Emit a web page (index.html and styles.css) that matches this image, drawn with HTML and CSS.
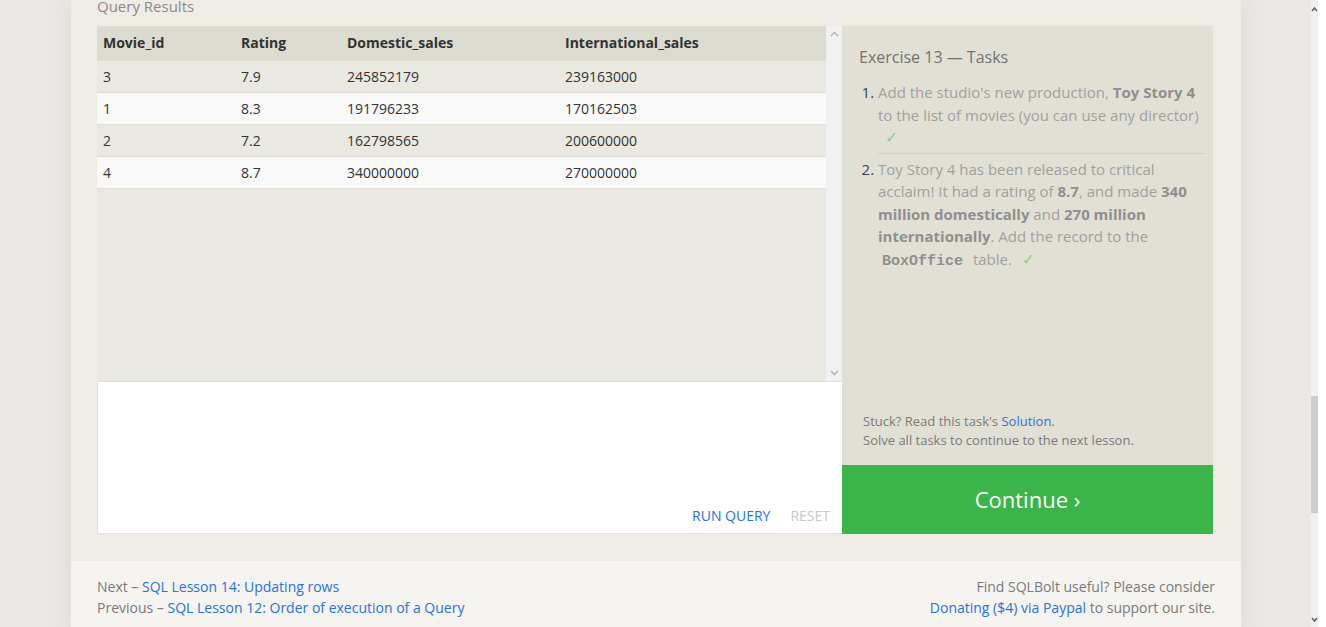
FILE: index.html
```html
<!DOCTYPE html>
<html lang="en">
<head>
<meta charset="utf-8">
<title>SQLBolt - Exercise 13</title>
<link rel="stylesheet" href="styles.css">
</head>
<body>
<div class="viewport">
  <div class="page">
    <div class="container">
      <section class="lesson">
        <h3 class="results-title">Query Results</h3>
        <div class="exercise">
          <div class="work">
            <div class="results">
              <div class="results-scroll">
                <table class="grid">
                  <thead>
                    <tr><th class="c1">Movie_id</th><th class="c2">Rating</th><th class="c3">Domestic_sales</th><th>International_sales</th></tr>
                  </thead>
                  <tbody>
                    <tr><td>3</td><td>7.9</td><td>245852179</td><td>239163000</td></tr>
                    <tr><td>1</td><td>8.3</td><td>191796233</td><td>170162503</td></tr>
                    <tr><td>2</td><td>7.2</td><td>162798565</td><td>200600000</td></tr>
                    <tr><td>4</td><td>8.7</td><td>340000000</td><td>270000000</td></tr>
                  </tbody>
                </table>
              </div>
              <div class="vscroll">
                <svg class="arrow" width="9" height="6" viewBox="0 0 9 6"><path d="M1 5 L4.5 1.5 L8 5" fill="none" stroke="#b0b0b0" stroke-width="1.4"/></svg>
                <svg class="arrow" width="9" height="6" viewBox="0 0 9 6"><path d="M1 1 L4.5 4.5 L8 1" fill="none" stroke="#b0b0b0" stroke-width="1.4"/></svg>
              </div>
            </div>
            <div class="editor">
              <div class="actions">
                <span class="run">RUN QUERY</span>
                <span class="reset">RESET</span>
              </div>
            </div>
          </div>
          <aside class="tasks">
            <h4 class="tasks-title">Exercise 13 — Tasks</h4>
            <ol class="task-list">
              <li>Add the studio's new production, <b>Toy Story 4</b> to the list of movies (you can use any director)<br><span class="check">✓</span></li>
              <li>Toy Story 4 has been released to critical<br>acclaim! It had a rating of <b>8.7</b>, and made <b>340</b><br><b>million domestically</b> and <b>270 million</b><br><b>internationally</b>. Add the record to the<br><code>BoxOffice</code> table. <span class="check">✓</span></li>
            </ol>
            <div class="stuck">
              <div>Stuck? Read this task's <a href="#">Solution</a>.</div>
              <div>Solve all tasks to continue to the next lesson.</div>
            </div>
            <div class="continue">Continue ›</div>
          </aside>
        </div>
      </section>
      <footer class="footer">
        <div class="footer-left">
          <div>Next – <a href="#">SQL Lesson 14: Updating rows</a></div>
          <div>Previous – <a href="#">SQL Lesson 12: Order of execution of a Query</a></div>
        </div>
        <div class="footer-right">
          <div>Find SQLBolt useful? Please consider</div>
          <div><a href="#">Donating ($4) via Paypal</a> to support our site.</div>
        </div>
      </footer>
    </div>
  </div>
  <div class="scrollbar">
    <svg class="sb-arrow" width="7" height="7" viewBox="0 0 7 7"><path d="M1 5 L3.5 2 L6 5" fill="none" stroke="#606060" stroke-width="1.5"/></svg>
    <div class="sb-track"><div class="sb-thumb"></div></div>
    <svg class="sb-arrow" width="7" height="7" viewBox="0 0 7 7"><path d="M1 2 L3.5 5 L6 2" fill="none" stroke="#606060" stroke-width="1.5"/></svg>
  </div>
  <div class="gutter"></div>
</div>
</body>
</html>
```
FILE: styles.css
```css
* { box-sizing: border-box; }
html, body { margin: 0; padding: 0; }
body {
  font-family: "Open Sans", "Liberation Sans", sans-serif;
  color: #333;
  background: #ebe7e4;
  overflow: hidden;
}
a { color: #2a72de; text-decoration: none; }

.viewport {
  display: flex;
  width: 1326px;
  height: 627px;
  overflow: hidden;
}
.page {
  width: 1311px;
  flex: none;
  background: #ebe7e4;
  overflow: hidden;
}
.container {
  width: 1170px;
  margin: 0 auto 0 71px;
  box-shadow: 0 0 24px rgba(90, 70, 50, 0.08);
}

.lesson {
  background: #efece5;
  padding: 0 26px 27px;
}
.results-title {
  margin: -4px 0 0;
  padding: 0;
  height: 30px;
  font-size: 15px;
  line-height: 20px;
  font-weight: 400;
  color: #8a8a8a;
}

.exercise {
  display: flex;
  height: 508px;
}
.work {
  width: 745px;
  display: flex;
  flex-direction: column;
}
.results {
  height: 355px;
  display: flex;
  background: #e9e8e1;
}
.results-scroll { flex: 1; }
.grid {
  width: 100%;
  border-collapse: collapse;
  font-size: 14px;
}
.grid th {
  text-align: left;
  background: #dcdbd0;
  font-weight: 700;
  height: 34px;
  padding: 0 6px;
  color: #333;
}
.grid th.c1 { width: 138px; }
.grid th.c2 { width: 106px; }
.grid th.c3 { width: 218px; }
.grid td {
  height: 32px;
  padding: 0 6px;
  border-top: 1px solid #dedcd5;
  color: #333;
}
.grid tbody tr:nth-child(odd) td { background: #e9e8e1; }
.grid tbody tr:nth-child(even) td { background: #f9f9f9; }
.grid tbody tr:last-child td { border-bottom: 1px solid #dedcd5; }

.vscroll {
  width: 16px;
  background: #f1f1f1;
  display: flex;
  flex-direction: column;
  justify-content: space-between;
  align-items: center;
  padding: 5px 0 5px;
}

.editor {
  flex: 1;
  background: #fff;
  border: 1px solid #e2e0d8;
  border-right: none;
  display: flex;
  align-items: flex-end;
  justify-content: flex-end;
}
.actions {
  display: flex;
  gap: 20px;
  padding: 0 12px 7px 0;
  font-size: 14px;
  line-height: 20px;
}
.run { color: #2a72de; }
.reset { color: #c9c9c9; }

.tasks {
  width: 371px;
  background: #e2e0d5;
  display: flex;
  flex-direction: column;
}
.tasks-title {
  margin: 0;
  padding: 20px 7px 0 17px;
  font-size: 16px;
  line-height: 22px;
  font-weight: 400;
  color: #737373;
}
.task-list {
  margin: 13px 7px 0 17px;
  padding: 0 0 0 19px;
  font-size: 15px;
  line-height: 22.5px;
  color: #a0a0a0;
}
.task-list li {
  padding: 0 0 3px;
  border-bottom: 1px solid #d3d1c7;
}
.task-list li + li {
  padding-top: 4px;
  border-bottom: none;
}
.task-list li::marker { color: #3a3f55; }
.task-list b { color: #8f8f8f; font-weight: 700; }
.task-list code {
  font-family: "Liberation Mono", "DejaVu Sans Mono", monospace;
  font-weight: 700;
  font-size: 15px;
  color: #8f8f8f;
  padding: 0 6px 0 4px;
}
.check {
  color: #8ccf8c;
  font-family: "DejaVu Sans", sans-serif;
  font-size: 16px;
  margin-left: 6px;
}
.task-list li:first-child .check { margin-left: 7px; }

.stuck {
  margin-top: auto;
  padding: 0 7px 15px 21px;
  font-size: 13px;
  line-height: 19px;
  color: #7a7a7a;
}
.continue {
  height: 69px;
  background: #3bb54a;
  color: #fff;
  font-size: 22px;
  line-height: 30px;
  padding-bottom: 2px;
  display: flex;
  align-items: center;
  justify-content: center;
}

.footer {
  background: #f5f4f1;
  display: flex;
  justify-content: space-between;
  padding: 15px 26px 20px;
  font-size: 14px;
  line-height: 21px;
  color: #7a7a7a;
}
.footer-right { text-align: right; }

.scrollbar {
  width: 7px;
  flex: none;
  background: #f0f0f0;
  display: flex;
  flex-direction: column;
  align-items: center;
}
.sb-arrow { flex: none; margin: 6px 0 0; }
.sb-arrow:last-child { margin: 0 0 4px; }
.sb-track { flex: 1; position: relative; width: 100%; }
.sb-thumb {
  position: absolute;
  left: 0;
  right: 0;
  top: 383px;
  height: 117px;
  background: #cdcdcd;
}
.gutter { width: 8px; flex: none; background: #fff; }
```
